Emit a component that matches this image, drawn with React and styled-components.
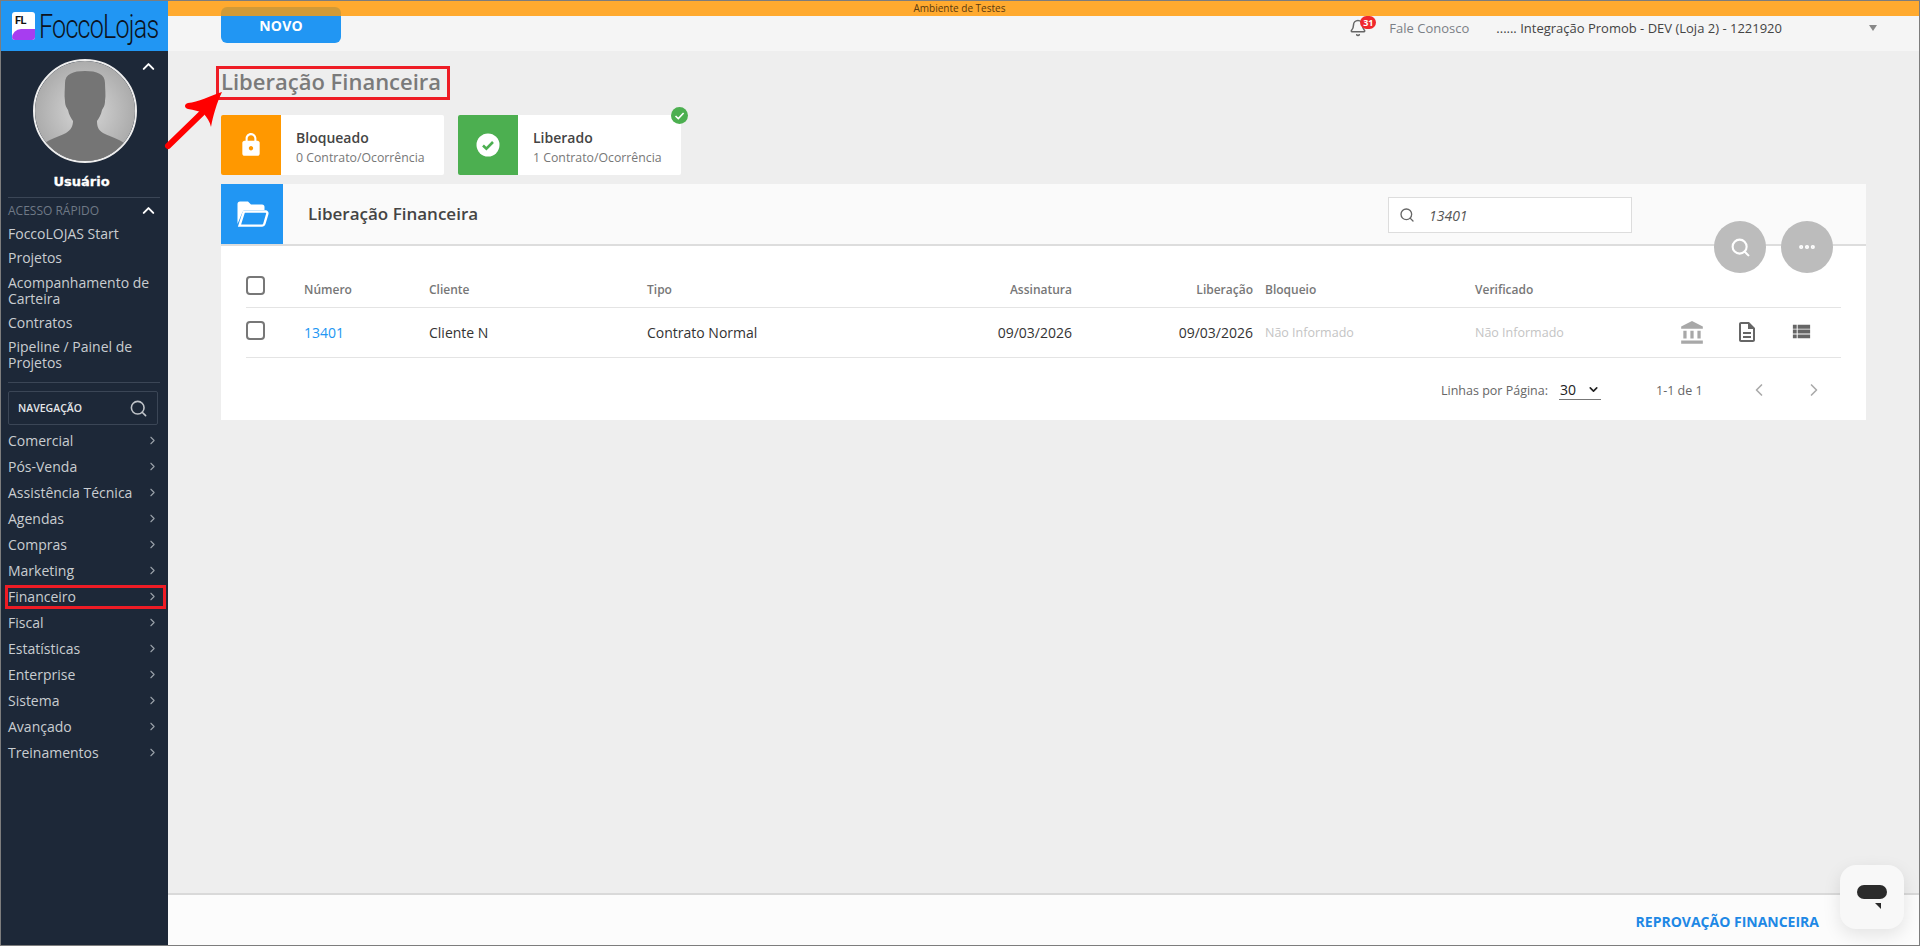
import React from 'react';
import styled, { createGlobalStyle } from 'styled-components';
import { Bell, ChevronDown, ChevronLeft, ChevronRight, ChevronUp, Search, Ellipsis } from 'lucide-react';
import { MdAccountBalance, MdOutlineDescription, MdViewList, MdLock } from 'react-icons/md';

const Global = createGlobalStyle`
  * { box-sizing: border-box; }
  html, body { margin: 0; padding: 0; height: 100%; overflow: hidden; }
  body { font-family: "Open Sans", "Liberation Sans", sans-serif; background: #eee; }
`;

const Shell = styled.div`
  position: relative; width: 1920px; height: 946px; display: grid; grid-template-columns: 167px 1fr;
  border: 1px solid #7d7d7d; overflow: hidden; background: #eee;
`;
const Side = styled.aside`background: #1d2838; display: flex; flex-direction: column; color: #c9cdd1; min-width: 0;`;
const LogoBar = styled.div`height: 50px; background: #2196f3; display: flex; align-items: center; padding-left: 11px; gap: 4px; flex: none; overflow: hidden;`;
const LogoMark = styled.div`
  position: relative; width: 23px; height: 28px; border-radius: 3px; background: #fff; overflow: hidden; flex: none;
  font: 700 11px/14px "Roboto", sans-serif; color: #111; padding: 2px 0 0 3px; letter-spacing: -.5px;
  &::after { content: ""; position: absolute; left: 0; right: 0; bottom: 0; height: 11px; background: #a73df0; border-radius: 9px 0 0 0; }
`;
const LogoText = styled.div`
  font: 300 33px/1 "Roboto", sans-serif; color: #0c1220; letter-spacing: -1px; white-space: nowrap;
  transform: scaleX(.76); transform-origin: left center; flex: none;
`;
const Profile = styled.div`position: relative; height: 146px; display: flex; flex-direction: column; align-items: center; padding: 8px 0 0 0; flex: none;`;
const Avatar = styled.div`width: 104px; height: 104px; border-radius: 50%; border: 2px solid #eee; overflow: hidden; flex: none;`;
const UserName = styled.div`margin: 10px 6px 0 0; font: 700 13px/18px "DejaVu Sans", sans-serif; color: #fff; -webkit-text-stroke: .3px #fff;`;
const CollapseUp = styled.span`position: absolute; right: 10px; top: ${p => p.$top}px; color: #fff; display: flex;`;
const Divider = styled.div`height: 1px; margin: 0 8px 0 7px; background: #3b4656; flex: none;`;
const QuickHead = styled.div`position: relative; height: 25px; padding: 5px 0 0 7px; font-size: 12px; line-height: 16px; color: #6f7986; flex: none;`;
const QuickList = styled.div`display: flex; flex-direction: column; gap: 8.3px; padding: 3px 8px 11px 7px; flex: none;`;
const QuickLink = styled.div`font-size: 14px; line-height: 16px; color: #c9cdd1;`;
const NavSearch = styled.div`
  margin: 8px 10px 2px 7px; height: 34px; border: 1px solid #3b4656; border-radius: 2px; display: flex; align-items: center;
  justify-content: space-between; padding: 0 9px 0 9px; font-size: 10.5px; font-weight: 600; color: #e4e6e8; flex: none;
  svg { color: #c0c4c9; }
`;
const NavList = styled.nav`display: flex; flex-direction: column; flex: none;`;
const NavItem = styled.div`
  height: 26px; display: flex; align-items: center; justify-content: space-between; padding: 0 9px 0 7px;
  font-size: 14px; color: #c9cdd1; svg { color: #9aa1a9; }
`;
const Main = styled.main`display: flex; flex-direction: column; min-width: 0; height: 944px;`;
const Banner = styled.div`height: 15px; background: #ffaa2f; color: #5a3a10; font-size: 10px; line-height: 15px; text-align: center; padding-right: 168px; flex: none;`;
const TopBar = styled.header`height: 35px; background: #f5f5f5; display: flex; align-items: center; justify-content: flex-end; padding: 0 42px 12px 0; flex: none;`;
const NewButton = styled.button`
  position: absolute; left: 220px; top: 6px; width: 120px; height: 36px; border: 0; border-radius: 6px; padding: 1px 0 0 0;
  background: linear-gradient(#d19a37 0 9px, #2196f3 9px); color: #fff; font: 700 14px "Open Sans", sans-serif; letter-spacing: .2px;
`;
const BellWrap = styled.span`position: relative; display: flex; margin-right: 22px; color: #666;`;
const Count = styled.span`
  position: absolute; left: 11px; top: -3px; min-width: 16px; height: 13px; border-radius: 7px; background: #f0282d; color: #fff;
  font-size: 9px; font-weight: 700; line-height: 13px; text-align: center;
`;
const Contact = styled.span`font-size: 13px; color: #7b7f86; margin-right: 27px;`;
const Store = styled.span`font-size: 13px; color: #444; margin-right: 87px; white-space: nowrap;`;
const Caret = styled.span`width: 0; height: 0; border: 4px solid transparent; border-top: 6px solid #888; border-bottom: 0;`;
const Content = styled.div`flex: 1; padding: 0 53px; min-height: 0;`;
const Title = styled.h1`margin: 15px 0 19px; font-size: 22px; line-height: 30px; font-weight: 600; color: #7a7a7a;`;
const Cards = styled.div`display: flex; gap: 14px; margin-bottom: 9px;`;
const Card = styled.div`position: relative; width: 223px; height: 60px; background: #fff; border-radius: 2px; display: flex; overflow: visible;`;
const CardIcon = styled.div`width: 60px; background: ${p => p.$c}; border-radius: 2px 0 0 2px; display: flex; align-items: center; justify-content: center; color: #fff; flex: none;`;
const CardBody = styled.div`padding: 13px 0 0 15px;`;
const CardTitle = styled.div`font-size: 14px; line-height: 19px; font-weight: 600; color: #444;`;
const CardSub = styled.div`margin-top: 3px; font-size: 12.3px; line-height: 16px; color: #777; font-weight: 500; white-space: nowrap;`;
const Badge = styled.span`position: absolute; right: -7px; top: -8px; display: flex;`;
const Panel = styled.section`position: relative; background: #fff;`;
const PanelHead = styled.div`height: 62px; background: #fafafa; border-bottom: 2px solid #ddd; display: flex; align-items: stretch;`;
const PanelIcon = styled.div`width: 62px; background: #2196f3; color: #fff; display: flex; align-items: center; justify-content: center; flex: none;`;
const PanelTitle = styled.h2`margin: 0 0 0 25px; font-size: 17px; font-weight: 600; color: #444; line-height: 60px;`;
const SearchBox = styled.div`
  position: absolute; left: 1167px; top: 13px; width: 244px; height: 36px; background: #fff; border: 1px solid #ddd;
  display: flex; align-items: center; gap: 14px; padding-left: 10px; font-size: 14px; font-style: italic; color: #555; svg { color: #666; }
`;
const Fab = styled.button`
  position: absolute; left: ${p => p.$left}px; top: 37px; width: 52px; height: 52px; border-radius: 50%; border: 0; background: #bcbcbc; color: #fff;
  display: flex; align-items: center; justify-content: center; padding: 0;
`;
const TableWrap = styled.div`padding: 0 25px;`;
const Row = styled.div`
  display: grid; grid-template-columns: 58px 125px 218px 180px 245px 181px 222px 160px 1fr; align-items: center;
  height: ${p => p.$h}px; border-bottom: 1px solid #e4e4e4; padding-top: ${p => p.$pt || 0}px;
`;
const Check = styled.span`width: 19px; height: 19px; border: 2px solid #777; border-radius: 4px; display: block; margin-bottom: ${p => p.$mb || 0}px;`;
const Head = styled.div`font-size: 12px; font-weight: 600; color: #777; text-align: ${p => p.$right ? 'right' : 'left'}; padding: 8px 0 0 ${p => p.$pl || 0}px;`;
const Cell = styled.div`
  font-size: ${p => p.$muted ? '12.5px' : '14px'}; color: ${p => p.$muted ? '#c4c4c4' : p.$link ? '#2196f3' : '#333'};
  text-align: ${p => p.$right ? 'right' : 'left'}; padding-left: ${p => p.$pl || 0}px;
`;
const Actions = styled.div`display: flex; justify-content: flex-end; padding-right: 12px; margin-left: -20px;`;
const ActionIcon = styled.span`width: 55px; display: flex; justify-content: center; color: ${p => p.$c};`;
const Pager = styled.div`height: 62px; display: flex; align-items: center; padding: 2px 0 0 1195px; font-size: 12.5px; font-weight: 500; color: #666;`;
const PerPage = styled.span`margin-right: 11px; white-space: nowrap;`;
const PageSelect = styled.span`
  width: 42px; height: 20px; border-bottom: 1px solid #777; display: flex; align-items: center; justify-content: space-between;
  padding: 0 1px 0 1px; color: #222; font-size: 14px; margin-right: 55px; flex: none;
`;
const Range = styled.span`margin-right: 46px; white-space: nowrap;`;
const PageArrow = styled.span`display: flex; color: #aaa; margin-right: 35px;`;
const Footer = styled.footer`height: 52px; background: #fcfcfc; border-top: 2px solid #d9d9d9; display: flex; align-items: center; justify-content: flex-end; padding: 0 100px 0 0; flex: none;`;
const FooterLink = styled.a`font-size: 14px; font-weight: 700; color: #1e88e5; padding-top: 3px;`;
const Chat = styled.div`
  position: absolute; left: 1839px; top: 864px; width: 64px; height: 64px; border-radius: 16px; background: #f8f8f8;
  box-shadow: 0 6px 18px rgba(0,0,0,.1); display: flex; align-items: center; justify-content: center;
`;
const RedBox = styled.div`position: absolute; border: 3px solid #ee1c25; left: ${p => p.$l}px; top: ${p => p.$t}px; width: ${p => p.$w}px; height: ${p => p.$h}px; pointer-events: none;`;
const Arrow = styled.svg`position: absolute; left: 163px; top: 87px;`;

const navItems = ['Comercial','Pós-Venda','Assistência Técnica','Agendas','Compras','Marketing','Financeiro','Fiscal','Estatísticas','Enterprise','Sistema','Avançado','Treinamentos'];
const quick = ['FoccoLOJAS Start','Projetos','Acompanhamento de Carteira','Contratos','Pipeline / Painel de Projetos'];

const AvatarArt = () => (
  <svg width="100" height="100" viewBox="0 0 100 100">
    <defs>
      <radialGradient id="ag" cx="0.5" cy="0.5" r="0.7">
        <stop offset="0" stopColor="#d8d8d8" /><stop offset="1" stopColor="#9a9a9a" />
      </radialGradient>
    </defs>
    <rect width="100" height="100" fill="url(#ag)" />
    <path d="M30 22c0-9 8-12 20-12s20 3 20 12c0 6 1 12 0 18 0 5-2 7-3 9-1 5-3 8-5 11 0 5 1 9 6 12 8 4 17 6 22 11v17H9V83c5-5 14-7 22-11 5-3 7-7 7-12-2-3-4-6-5-11-1-2-3-4-3-9-1-6 0-12 0-18z" fill="#757575" />
  </svg>
);

const FolderIcon = () => (
  <svg width="33" height="28" viewBox="0 0 33 28">
    <path d="M1.5 24V4a2.5 2.5 0 0 1 2.5-2.5h8l3 3h11a2.5 2.5 0 0 1 2.5 2.5v3H9.5a3.5 3.5 0 0 0-3.2 2.4L1.5 24z" fill="#fff" />
    <path d="M9 11.5h20.5a1.8 1.8 0 0 1 1.8 2.3l-3 10.2a2.2 2.2 0 0 1-2.1 1.6H3.5L7.6 12.6A1.6 1.6 0 0 1 9 11.5z" fill="none" stroke="#fff" strokeWidth="2.4" />
  </svg>
);

export default function App() {
  return (
    <Shell>
      <Global />
      <Side>
        <LogoBar>
          <LogoMark>FL</LogoMark>
          <LogoText>FoccoLojas</LogoText>
        </LogoBar>
        <Profile>
          <Avatar><AvatarArt /></Avatar>
          <UserName>Usuário</UserName>
          <CollapseUp $top={6}><ChevronUp size={19} strokeWidth={2.5} /></CollapseUp>
        </Profile>
        <Divider />
        <QuickHead>
          ACESSO RÁPIDO
          <CollapseUp $top={3}><ChevronUp size={19} strokeWidth={2.5} /></CollapseUp>
        </QuickHead>
        <QuickList>
          {quick.map(q => <QuickLink key={q}>{q}</QuickLink>)}
        </QuickList>
        <Divider />
        <NavSearch>NAVEGAÇÃO<Search size={19} /></NavSearch>
        <NavList>
          {navItems.map(n => <NavItem key={n}>{n}<ChevronRight size={13} /></NavItem>)}
        </NavList>
      </Side>
      <Main>
        <Banner>Ambiente de Testes</Banner>
        <TopBar>
          <BellWrap><Bell size={18} /><Count>31</Count></BellWrap>
          <Contact>Fale Conosco</Contact>
          <Store>...... Integração Promob - DEV (Loja 2) - 1221920</Store>
          <Caret />
        </TopBar>
        <Content>
          <Title>Liberação Financeira</Title>
          <Cards>
            <Card>
              <CardIcon $c="#ff9800"><MdLock size={26} /></CardIcon>
              <CardBody><CardTitle>Bloqueado</CardTitle><CardSub>0 Contrato/Ocorrência</CardSub></CardBody>
            </Card>
            <Card>
              <CardIcon $c="#4caf50">
                <svg width="24" height="24" viewBox="0 0 24 24"><circle cx="12" cy="12" r="11.5" fill="#fff" /><path d="M7 12.5l3.4 3.2L17 9" fill="none" stroke="#4caf50" strokeWidth="2.6" /></svg>
              </CardIcon>
              <CardBody><CardTitle>Liberado</CardTitle><CardSub>1 Contrato/Ocorrência</CardSub></CardBody>
              <Badge>
                <svg width="17" height="17" viewBox="0 0 17 17"><circle cx="8.5" cy="8.5" r="8.5" fill="#4caf50" /><path d="M4.5 9l2.8 2.6L12.6 6" fill="none" stroke="#fff" strokeWidth="1.6" /></svg>
              </Badge>
            </Card>
          </Cards>
          <Panel>
            <PanelHead>
              <PanelIcon><FolderIcon /></PanelIcon>
              <PanelTitle>Liberação Financeira</PanelTitle>
            </PanelHead>
            <SearchBox><Search size={16} />13401</SearchBox>
            <Fab $left={1493}><Search size={21} strokeWidth={2.4} /></Fab>
            <Fab $left={1560}><Ellipsis size={20} strokeWidth={3} /></Fab>
            <TableWrap>
              <Row $h={62} $pt={18}>
                <Check />
                <Head>Número</Head>
                <Head>Cliente</Head>
                <Head>Tipo</Head>
                <Head $right>Assinatura</Head>
                <Head $right>Liberação</Head>
                <Head $pl={12}>Bloqueio</Head>
                <Head>Verificado</Head>
                <span />
              </Row>
              <Row $h={50}>
                <Check $mb={4} />
                <Cell $link>13401</Cell>
                <Cell>Cliente N</Cell>
                <Cell>Contrato Normal</Cell>
                <Cell $right>09/03/2026</Cell>
                <Cell $right>09/03/2026</Cell>
                <Cell $muted $pl={12}>Não Informado</Cell>
                <Cell $muted>Não Informado</Cell>
                <Actions>
                  <ActionIcon $c="#a8a8a8"><MdAccountBalance size={26} /></ActionIcon>
                  <ActionIcon $c="#666"><MdOutlineDescription size={24} /></ActionIcon>
                  <ActionIcon $c="#666"><MdViewList size={23} /></ActionIcon>
                </Actions>
              </Row>
              <Pager>
                <PerPage>Linhas por Página:</PerPage>
                <PageSelect>30<ChevronDown size={13} strokeWidth={3} /></PageSelect>
                <Range>1-1 de 1</Range>
                <PageArrow><ChevronLeft size={20} /></PageArrow>
                <PageArrow><ChevronRight size={20} /></PageArrow>
              </Pager>
            </TableWrap>
          </Panel>
        </Content>
        <Footer><FooterLink>REPROVAÇÃO FINANCEIRA</FooterLink></Footer>
      </Main>
      <NewButton>NOVO</NewButton>
      <RedBox $l={215} $t={65} $w={234} $h={34} />
      <RedBox $l={4} $t={584} $w={161} $h={24} />
      <Arrow width="64" height="64" viewBox="0 0 64 64">
        <path d="M4 58L38 25" stroke="#f00" strokeWidth="6" strokeLinecap="round" fill="none" />
        <path d="M58 4C46 8 34 14 24 15C20 16 20 20 24 21C30 22 35 23 39 25C43 29 46 34 47 39C49 28 53 14 58 4z" fill="#f00" />
      </Arrow>
      <Chat>
        <svg width="34" height="30" viewBox="0 0 34 30">
          <rect x="2" y="3" width="30" height="14" rx="7" fill="#2b2b2b" />
          <path d="M20 21h6v6z" fill="#2b2b2b" />
        </svg>
      </Chat>
    </Shell>
  );
}
